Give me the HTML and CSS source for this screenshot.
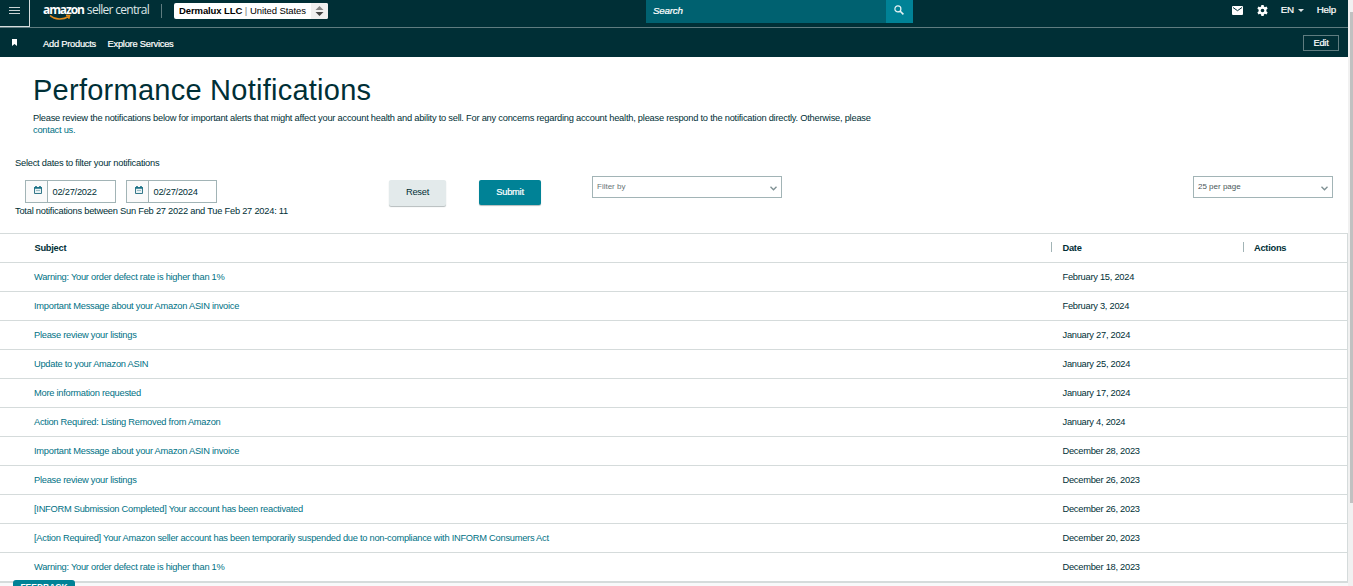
FILE: index.html
```html
<!DOCTYPE html>
<html lang="en">

<head>
    <meta charset="utf-8">
    <title>Performance Notifications</title>
    <link rel="stylesheet" href="styles.css">
</head>

<body>
    <div class="page">
        <div class="topbar">
            <div class="menu">
                <svg width="11" height="9" viewBox="0 0 11 9"><path d="M0 1.5h11M0 4.5h11M0 7.5h11" stroke="#c9d3d4"/></svg>
            </div>
            <div class="logo">
                <b>amazon</b><span>seller central</span>
                <svg class="smile" width="22" height="7" viewBox="0 0 22 7"><path d="M1 1.5C6 6 14 6 19.5 2.5M17 1.2l3.7 .3-1 3.3" fill="none" stroke="#e38b1b" stroke-width="1.5"/></svg>
            </div>
            <div class="account">
                <b>Dermalux LLC</b><i>|</i><span>United States</span>
                <div class="arrows">
                    <svg width="9" height="10" viewBox="0 0 9 10"><path d="M0.5 4L4.5 0l4 4z" fill="#888"/><path d="M0.5 6h8l-4 4z" fill="#444"/></svg>
                </div>
            </div>
            <div class="search">
                <div class="searchText">Search</div>
                <div class="searchBtn">
                    <svg width="10" height="10" viewBox="0 0 10 10"><circle cx="3.9" cy="3.9" r="3" fill="none" stroke="#e6f3f5" stroke-width="1.2"/><path d="M6 6l3.4 3.4" stroke="#e6f3f5" stroke-width="1.6"/></svg>
                </div>
            </div>
            <div class="tools">
                <svg class="mail" width="11" height="9" viewBox="0 0 11 9"><rect width="11" height="9" rx="1" fill="#fff"/><path d="M1 1.5l4.5 3.2L10 1.5" fill="none" stroke="#002f36"/></svg>
                <svg class="gear" width="11" height="11" viewBox="0 0 24 24"><path fill="#fff" fill-rule="evenodd" d="M9.500 0h5l.6 3.500 2.200 1.300 3.400-1.300 2.500 4.300-2.800 2.300v3.800l2.800 2.300-2.500 4.300-3.400-1.300-2.200 1.300-.6 3.500h-5l-.6-3.500-2.200-1.300-3.400 1.300L.8 16.200l2.800-2.300v-3.800L.8 7.800l2.500-4.300 3.400 1.300 2.200-1.300zM12 8a4 4 0 1 0 0 8 4 4 0 0 0 0-8z"/></svg>
                <span class="lang">EN</span>
                <svg class="caret" width="6" height="3" viewBox="0 0 6 3"><path d="M0 0h6L3 3z" fill="#dfe6e7"/></svg>
                <span class="help">Help</span>
            </div>
        </div>

        <div class="navbar">
            <svg class="bookmark" width="5" height="7" viewBox="0 0 5 7"><path d="M0 0h5v7L2.500 5 0 7z" fill="#fff"/></svg>
            <span class="nav1">Add Products</span>
            <span class="nav2">Explore Services</span>
            <div class="edit">Edit</div>
        </div>

        <div class="intro">
            <h1>Performance Notifications</h1>
            <p>Please review the notifications below for important alerts that might affect your account health and ability to sell. For any concerns regarding account health, please respond to the notification directly. Otherwise, please<br><a>contact us.</a></p>
        </div>

        <div class="selectDates">Select dates to filter your notifications</div>
        <div class="filters">
            <div class="date">
                <div class="cal"><svg width="8" height="8" viewBox="0 0 8 8"><path d="M.5 1.500h7v6h-7z" fill="#e8f1f3" stroke="#35788a"/><path d="M0 2h8M2 0v2M6 0v2" stroke="#1b7186" stroke-width="1.600"/><path d="M2 4.500h4" stroke="#9bbcc5"/></svg></div>
                <div class="dateText">02/27/2022</div>
            </div>
            <div class="date">
                <div class="cal"><svg width="8" height="8" viewBox="0 0 8 8"><path d="M.5 1.500h7v6h-7z" fill="#e8f1f3" stroke="#35788a"/><path d="M0 2h8M2 0v2M6 0v2" stroke="#1b7186" stroke-width="1.600"/><path d="M2 4.500h4" stroke="#9bbcc5"/></svg></div>
                <div class="dateText">02/27/2024</div>
            </div>
            <div class="reset">Reset</div>
            <div class="submit">Submit</div>
            <div class="select filterBy"><span>Filter by</span><svg width="7" height="5" viewBox="0 0 7 5"><path d="M.5 .8l3 3 3-3" fill="none" stroke="#7d8f92" stroke-width="1.300"/></svg></div>
            <div class="select perPage"><span>25 per page</span><svg width="7" height="5" viewBox="0 0 7 5"><path d="M.5 .8l3 3 3-3" fill="none" stroke="#7d8f92" stroke-width="1.300"/></svg></div>
        </div>
        <div class="total">Total notifications between Sun Feb 27 2022 and Tue Feb 27 2024: 11</div>

        <div class="table">
            <div class="row head"><div class="subject">Subject</div><div class="when">Date</div><div class="actions">Actions</div></div>
            <div class="row"><a class="subject">Warning: Your order defect rate is higher than 1%</a><div class="when">February 15, 2024</div></div>
            <div class="row"><a class="subject">Important Message about your Amazon ASIN invoice</a><div class="when">February 3, 2024</div></div>
            <div class="row"><a class="subject">Please review your listings</a><div class="when">January 27, 2024</div></div>
            <div class="row"><a class="subject">Update to your Amazon ASIN</a><div class="when">January 25, 2024</div></div>
            <div class="row"><a class="subject">More information requested</a><div class="when">January 17, 2024</div></div>
            <div class="row"><a class="subject">Action Required: Listing Removed from Amazon</a><div class="when">January 4, 2024</div></div>
            <div class="row"><a class="subject">Important Message about your Amazon ASIN invoice</a><div class="when">December 28, 2023</div></div>
            <div class="row"><a class="subject">Please review your listings</a><div class="when">December 26, 2023</div></div>
            <div class="row"><a class="subject">[INFORM Submission Completed] Your account has been reactivated</a><div class="when">December 26, 2023</div></div>
            <div class="row"><a class="subject">[Action Required] Your Amazon seller account has been temporarily suspended due to non-compliance with INFORM Consumers Act</a><div class="when">December 20, 2023</div></div>
            <div class="row"><a class="subject">Warning: Your order defect rate is higher than 1%</a><div class="when">December 18, 2023</div></div>
        </div>
        <div class="feedback">FEEDBACK</div>
    </div>
    <div class="scroll"><div class="thumb"></div></div>
</body>

</html>
```
FILE: styles.css
```css
* {
    box-sizing: border-box;
}

body {
    margin: 0;
    height: 586px;
    overflow: hidden;
    display: flex;
    background-color: #f8f9fa;
    font-family: "Liberation Sans", Arial, sans-serif;
    font-size: 9.3px;
    letter-spacing: -0.235px;
    line-height: 12px;
    color: #002f36;
    white-space: nowrap;
}

svg {
    display: block;
    flex: none;
}

a {
    color: #007185;
}

.page {
    position: relative;
    width: 1348px;
    height: 586px;
    overflow: hidden;
}

/* dark header */
.topbar {
    display: flex;
    height: 28px;
    background-color: #002f36;
    border-bottom: 1px solid #5f7c80;
    color: #fff;
}

.menu {
    width: 30px;
    height: 27px;
    padding: 6px 0 0 9px;
    border-right: 1px solid #d5dcdd;
    border-bottom: 1px solid #d5dcdd;
}

.logo {
    position: relative;
    width: 132px;
    height: 14px;
    margin-top: 4px;
    padding-left: 13px;
    border-right: 1px solid #5f7c80;
    font-family: "Open Sans", sans-serif;
    font-size: 12px;
    line-height: 12px;
    letter-spacing: -0.7px;
}

.logo b {
    letter-spacing: -1.1px;
}

.logo span {
    margin-left: 3px;
    color: #dfe6e7;
}

.smile {
    position: absolute;
    left: 19px;
    top: 10px;
}

.account {
    display: flex;
    width: 154px;
    height: 16px;
    margin: 3px 0 0 12px;
    padding-left: 5px;
    background-color: #fff;
    border-radius: 2px;
    color: #000;
    font-size: 9.5px;
    letter-spacing: -0.1px;
    line-height: 16px;
}

.account i {
    margin: 0 3px 0 2.5px;
    font-style: normal;
    color: #777;
}

.arrows {
    width: 17px;
    margin-left: auto;
    padding: 3px 0 0 4px;
    background-color: #f0f0f0;
    border-radius: 0 2px 2px 0;
}

.search {
    display: flex;
    width: 267px;
    height: 23px;
    margin-left: 318px;
    line-height: 22px;
    font-style: italic;
}

.searchText {
    width: 240px;
    padding-left: 7px;
    background-color: #006170;
    font-size: 9.8px;
    -webkit-text-stroke: 0.2px #fff;
}

.searchBtn {
    width: 27px;
    padding: 5px 0 0 8px;
    background-color: #008296;
}

.tools {
    display: flex;
    margin-left: auto;
    padding-right: 12px;
    font-size: 9.8px;
    line-height: 20px;
    -webkit-text-stroke: 0.2px #fff;
}

.mail {
    margin: 6px 14px 0 0;
}

.gear {
    margin: 5px 13px 0 0;
}

.caret {
    margin: 9px 13px 0 4px;
}

.navbar {
    display: flex;
    height: 29px;
    background-color: #002f36;
    color: #fff;
    line-height: 32px;
    -webkit-text-stroke: 0.2px #fff;
}

.bookmark {
    margin: 11px 26px 0 12px;
}

.nav1 {
    width: 64.5px;
}

.edit {
    width: 36px;
    height: 16px;
    margin: 7px 9px 0 auto;
    border: 1px solid #5f7c80;
    line-height: 15px;
    text-align: center;
}

/* title and filters */
.intro {
    height: 98px;
    padding: 17px 0 0 33px;
    background-color: #fff;
}

h1 {
    margin: 0;
    height: 38px;
    font-size: 29px;
    font-weight: normal;
    letter-spacing: 0.25px;
    line-height: 33px;
}

p {
    margin: 0;
}

.selectDates {
    height: 21px;
    padding: 2px 0 0 15px;
    background-color: #fff;
}

.filters {
    display: flex;
    height: 29px;
    padding-left: 25px;
    background-color: #fff;
}

.date {
    display: flex;
    width: 91px;
    height: 23px;
    margin: 4px 10px 0 0;
    border: 1px solid #a2b4b6;
    line-height: 22px;
}

.cal {
    width: 22px;
    padding: 5px 0 0 8px;
    background-color: #fafafa;
    border-right: 1px solid #a2b4b6;
}

.dateText {
    padding-left: 4.5px;
}

.reset,
.submit {
    border-radius: 2px;
    text-align: center;
    box-shadow: 0 1px 1px #b5bcbd;
}

.reset {
    width: 57px;
    height: 26px;
    margin: 4px 0 0 162px;
    background-color: #e3eaeb;
    line-height: 24px;
}

.submit {
    width: 62px;
    height: 25px;
    margin: 4px 0 0 33px;
    background-color: #008296;
    color: #fff;
    line-height: 24px;
    -webkit-text-stroke: 0.2px #fff;
}

.select {
    display: flex;
    justify-content: space-between;
    height: 22px;
    padding: 0 4px;
    border: 1px solid #a2b4b6;
    color: #6a7678;
    font-size: 8px;
    letter-spacing: 0;
    line-height: 19px;
}

.select svg {
    margin-top: 9px;
}

.filterBy {
    width: 190px;
    margin-left: 51px;
}

.perPage {
    width: 140px;
    margin-left: 411px;
    color: #4a585a;
}

.total {
    height: 28px;
    padding-left: 15px;
    background-color: #fff;
}

/* notifications */
.table {
    background-color: #fff;
    border: 1px solid #d5dbdb;
    border-left: 0;
    letter-spacing: -0.26px;
}

.row {
    display: flex;
    height: 29px;
    padding-left: 34px;
    border-bottom: 1px solid #d5dbdb;
    line-height: 28px;
}

.subject {
    width: 1028.5px;
}

.head {
    font-weight: bold;
}

.head .subject {
    padding-left: 0.5px;
}

.head .when,
.head .actions {
    position: relative;
}

.head .when {
    width: 191.5px;
}

.head .when::before,
.head .actions::before {
    content: "";
    position: absolute;
    left: -11px;
    top: 8px;
    width: 1px;
    height: 10px;
    background-color: #a2b4b6;
}

.head .when::before {
    left: -11.5px;
}

.feedback {
    position: absolute;
    left: 13px;
    top: 580px;
    width: 62px;
    height: 20px;
    background-color: #008296;
    border-radius: 3px;
    color: #fff;
    font-size: 8.5px;
    letter-spacing: 0;
    font-weight: bold;
    text-align: center;
    line-height: 15px;
}

.scroll {
    width: 5px;
    padding: 12px 0 0 2px;
    background-color: #f1f1f1;
}

.thumb {
    height: 491px;
    background-color: #c1c1c1;
}
```
